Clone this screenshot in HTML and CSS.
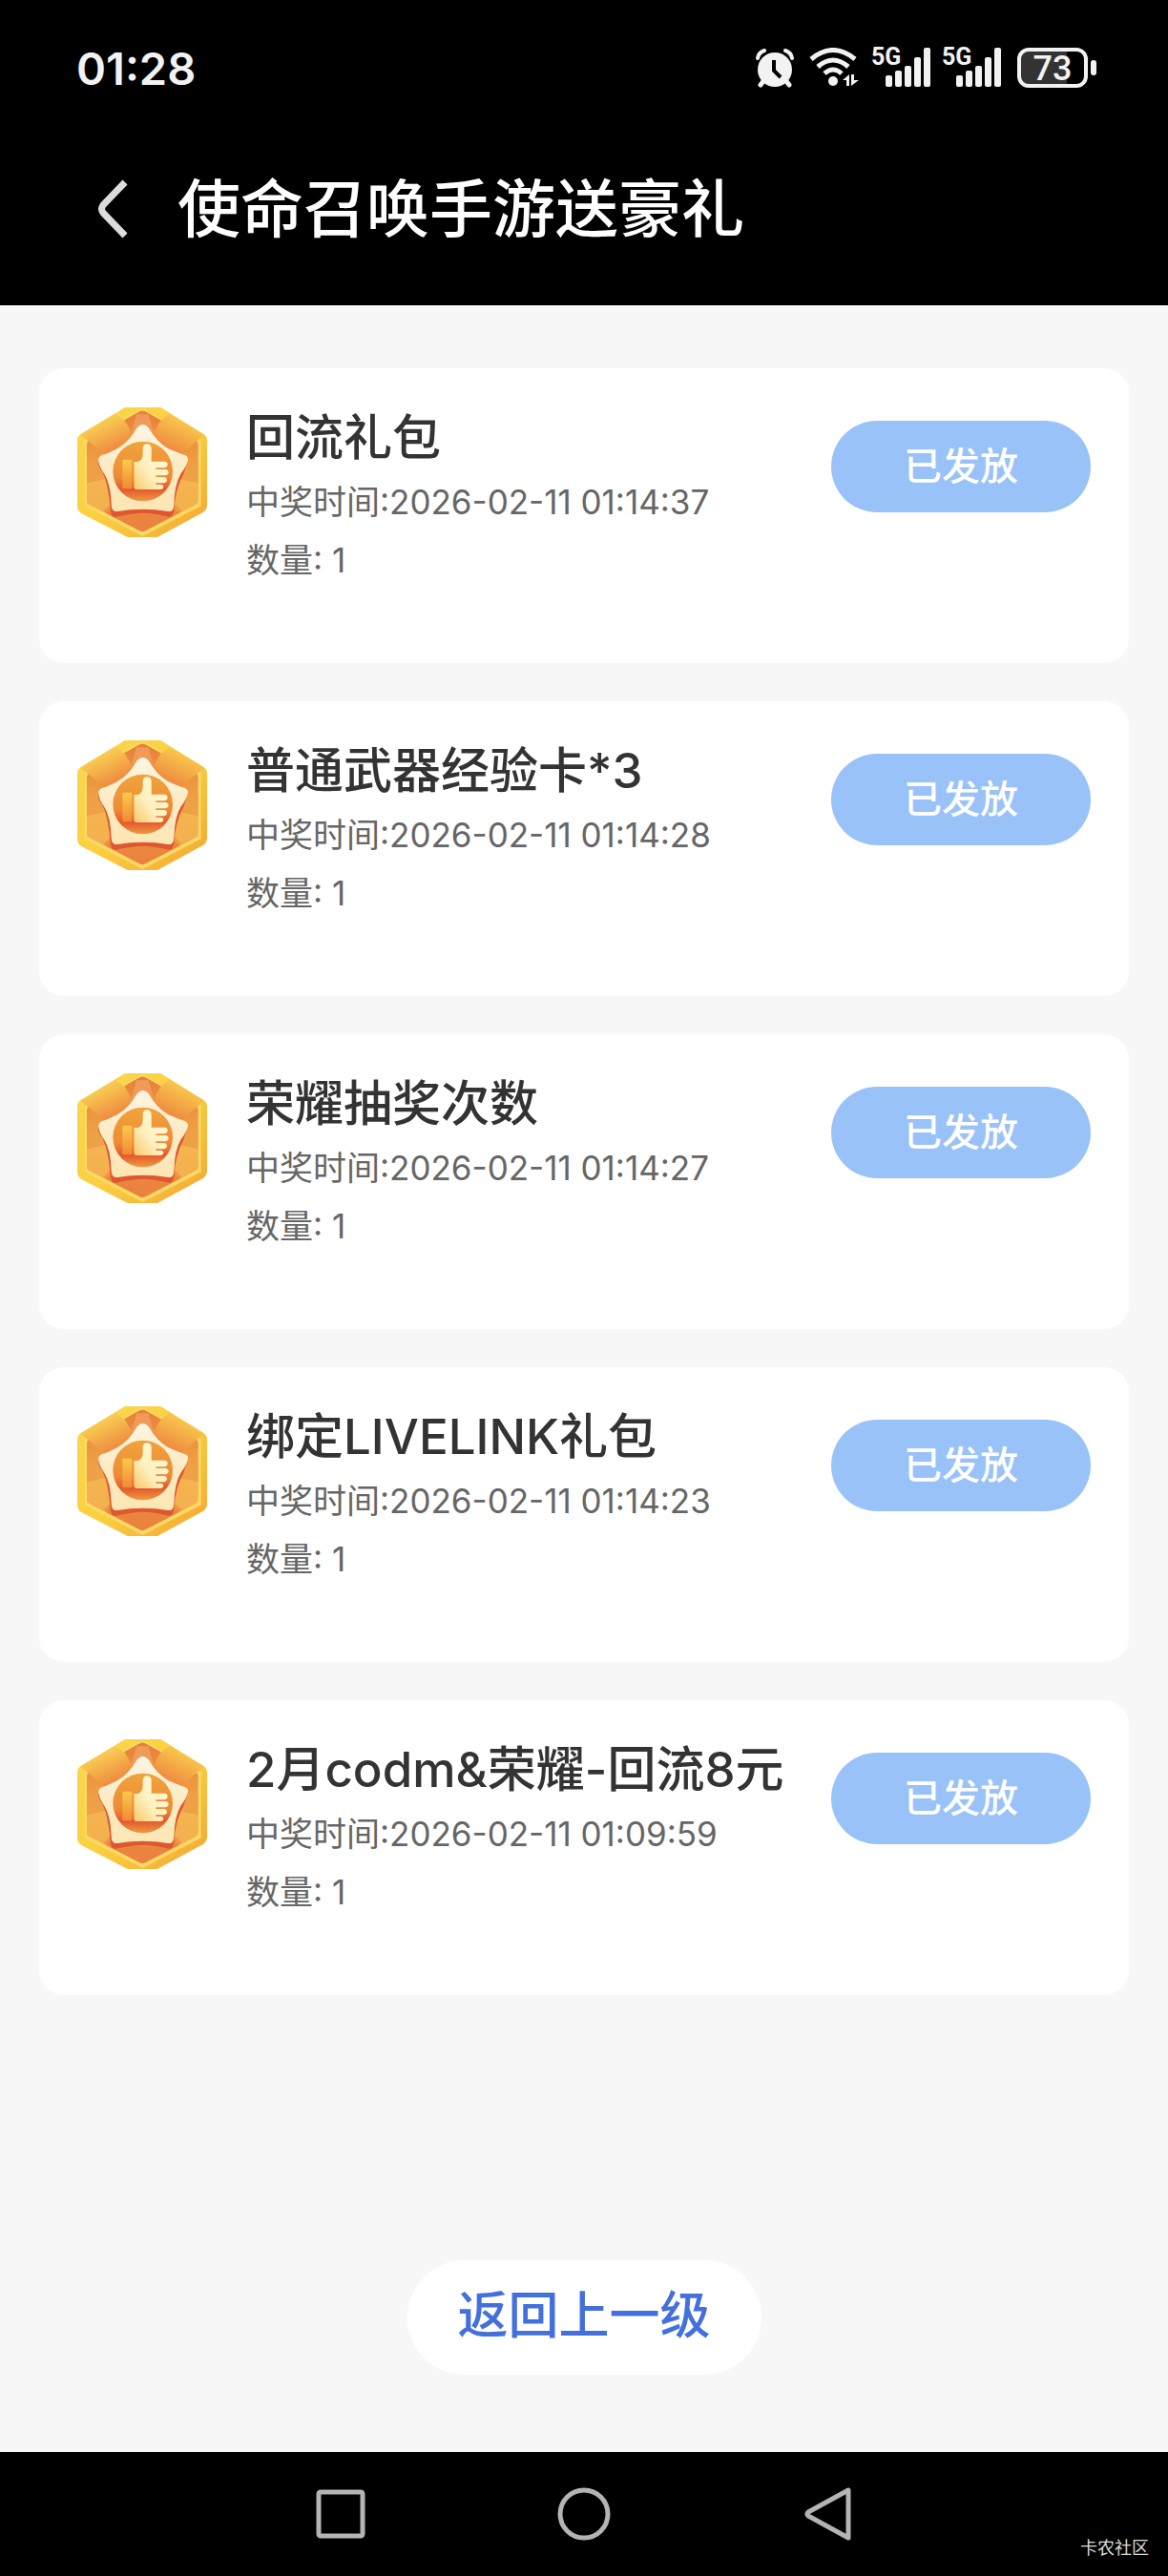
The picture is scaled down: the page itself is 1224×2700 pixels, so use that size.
FILE: index.html
```html
<!DOCTYPE html>
<html lang="zh-CN">
<head>
  <meta charset="UTF-8">
  <meta name="viewport" content="width=device-width, initial-scale=1.0">
  <title>使命召唤手游送豪礼</title>
  <link rel="stylesheet" href="styles.css">
</head>
<body>
  <!-- shared icons -->
  <svg class="sprite" width="0" height="0" aria-hidden="true">
    <defs>
      <linearGradient id="rim" x1="0" y1="0" x2="1" y2="1">
        <stop offset="0" stop-color="#f9d84e"/>
        <stop offset="0.5" stop-color="#fbd040"/>
        <stop offset="1" stop-color="#f2a634"/>
      </linearGradient>
      <linearGradient id="inner" x1="0" y1="0" x2="0" y2="1">
        <stop offset="0" stop-color="#e8803a"/>
        <stop offset="0.55" stop-color="#f0a744"/>
        <stop offset="1" stop-color="#eb8d42"/>
      </linearGradient>
      <linearGradient id="foldL" x1="0.2" y1="0.1" x2="0.7" y2="0.9">
        <stop offset="0" stop-color="#fadb5c"/>
        <stop offset="0.4" stop-color="#f6bb4c"/>
        <stop offset="1" stop-color="#ee8540"/>
      </linearGradient>
      <linearGradient id="foldR" x1="0.8" y1="0.1" x2="0.3" y2="0.9">
        <stop offset="0" stop-color="#fad250"/>
        <stop offset="0.4" stop-color="#f6b548"/>
        <stop offset="1" stop-color="#ee8540"/>
      </linearGradient>
      <linearGradient id="star" x1="0" y1="0" x2="0" y2="1">
        <stop offset="0" stop-color="#fdf6e4"/>
        <stop offset="0.5" stop-color="#fcebc4"/>
        <stop offset="1" stop-color="#fde6b4"/>
      </linearGradient>
      <linearGradient id="disc" x1="0" y1="0" x2="0" y2="1">
        <stop offset="0" stop-color="#efa43c"/>
        <stop offset="0.6" stop-color="#ef8a37"/>
        <stop offset="0.8" stop-color="#e3582e"/>
        <stop offset="1" stop-color="#f09a40"/>
      </linearGradient>
      <linearGradient id="hand" x1="1" y1="0" x2="0" y2="1">
        <stop offset="0" stop-color="#fffbe6"/>
        <stop offset="0.6" stop-color="#fff0bd"/>
        <stop offset="1" stop-color="#fbc76a"/>
      </linearGradient>
      <linearGradient id="cuff" x1="0" y1="0" x2="0" y2="1">
        <stop offset="0" stop-color="#fbcb4a"/>
        <stop offset="1" stop-color="#f08a35"/>
      </linearGradient>
    </defs>
    <symbol id="badge" viewBox="0 0 408 408">
      <path fill="url(#rim)" d="M150 0H262L394 82Q408 90 408 104V306Q408 322 394 331L252 408H158L14 334Q0 326 0 310V104Q0 90 14 82Z"/>
      <path fill="#fbd966" d="M205 3L389 101V310L205 405L23 310V101Z"/>
      <path fill="url(#inner)" d="M192 15Q205 6 218 15L368 98Q380 105 380 118V291Q380 301 370 307L215 388Q205 393 195 388L40 307Q30 301 30 291V118Q30 105 42 98Z"/>
      <path fill="#eda047" opacity=".7" d="M205 200L30 174V240ZM205 200L380 174V240Z"/>
      <path fill="#f6bb54" opacity=".7" d="M205 200L30 238V302L80 328ZM205 200L380 238V302L330 328Z"/>
      <path fill="#e8743a" opacity=".45" d="M205 200L90 333L205 391L320 333Z"/>
      <path fill="#f0a061" opacity=".8" d="M186 22L170 80H240L224 22Z"/>
      <path fill="url(#foldL)" d="M10 86L118 20L150 42L178 92L86 150L40 110Z"/>
      <path fill="url(#foldR)" d="M398 86L290 20L262 42L232 92L324 150L370 110Z"/>
      <path fill="#df5730" d="M66 170Q64 184 80 205Q98 245 104 320Q106 348 122 344Q175 332 206 332Q238 332 288 344Q302 346 304 320Q310 250 334 210L348 166Z"/>
      <path fill="url(#star)" d="M188 64Q206 44 224 64Q250 110 286 130Q322 145 338 150Q352 156 347 170Q342 186 326 208Q306 240 304 305Q303 330 286 327Q246 320 206 320Q166 320 126 327Q108 330 107 305Q105 240 84 208Q70 188 67 170Q64 156 78 150Q96 145 126 130Q162 110 188 64Z"/>
      <circle cx="206" cy="201" r="94" fill="url(#disc)"/>
      <rect x="142" y="164" width="30" height="92" rx="4" fill="url(#cuff)"/>
      <path fill="url(#hand)" d="M178 171H190Q206 166 206 146V128Q207 115 220 115Q233 116 233 130V170H274Q284 171 284 180Q283 189 273 190H247V195H276Q287 196 287 205Q286 213 276 214H247V219H272Q282 220 282 229Q281 237 272 238H247V242H262Q271 243 271 250Q270 258 260 258H188Q178 258 178 248Z"/>
    </symbol>
    <symbol id="signal" viewBox="0 0 48 42">
      <g fill="#f2f2f2">
        <rect x="0" y="29" width="7" height="12" rx="2"/>
        <rect x="10" y="24" width="7" height="17" rx="2"/>
        <rect x="20" y="19" width="7" height="22" rx="2"/>
        <rect x="30" y="10" width="7" height="31" rx="2"/>
        <rect x="40" y="0" width="7" height="41" rx="2"/>
      </g>
    </symbol>
  </svg>

  <div class="status-bar">
    <time class="clock">01:28</time>
    <div class="status-icons">
      <svg width="40" height="42" viewBox="0 0 40 42" aria-label="闹钟">
        <g fill="none" stroke="#f2f2f2" stroke-linecap="round">
          <path stroke-width="4" d="M2 11Q3 5 9 3M38 11Q37 5 31 3"/>
          <path stroke-width="5" d="M8 35L5 39M32 35L35 39"/>
        </g>
        <circle cx="20" cy="23" r="18" fill="#f2f2f2"/>
        <path d="M19 13V24L26 31" fill="none" stroke="#000" stroke-width="4"/>
      </svg>
      <svg class="wifi" width="54" height="42" viewBox="0 0 54 42" aria-label="无线网络">
        <g fill="none" stroke="#f2f2f2" stroke-width="5">
          <path d="M2 12Q25 -7 48 12"/>
          <path d="M9 20Q25 6 41 20"/>
          <path d="M16 27Q25 19 34 27"/>
        </g>
        <circle cx="25" cy="35" r="5" fill="#f2f2f2"/>
        <path d="M35 34L42 28V40H39V34ZM44 28H47V34H52L44 40Z" fill="#f2f2f2"/>
      </svg>
      <div class="network">
        <span class="network-type">5G</span>
        <svg width="48" height="42"><use href="#signal"/></svg>
      </div>
      <div class="network">
        <span class="network-type">5G</span>
        <svg width="48" height="42"><use href="#signal"/></svg>
      </div>
      <div class="battery"><span class="battery-level">73</span></div>
    </div>
  </div>

  <header class="header">
    <button class="back" type="button" aria-label="返回">
      <svg width="32" height="62" viewBox="0 0 32 62" fill="none" stroke="#dcdcdc" stroke-width="7" stroke-linejoin="round">
        <path d="M29 3L6 27Q3 31 6 35L29 59"/>
      </svg>
    </button>
    <h1>使命召唤手游送豪礼</h1>
  </header>

  <main class="content">
    <ul class="prizes">
      <li class="card">
        <svg class="badge"><use href="#badge"/></svg>
        <div class="info">
          <h2>回流礼包</h2>
          <p>中奖时间:2026-02-11 01:14:37</p>
          <p>数量: 1</p>
        </div>
        <button class="state" type="button">已发放</button>
      </li>
      <li class="card">
        <svg class="badge"><use href="#badge"/></svg>
        <div class="info">
          <h2>普通武器经验卡*3</h2>
          <p>中奖时间:2026-02-11 01:14:28</p>
          <p>数量: 1</p>
        </div>
        <button class="state" type="button">已发放</button>
      </li>
      <li class="card">
        <svg class="badge"><use href="#badge"/></svg>
        <div class="info">
          <h2>荣耀抽奖次数</h2>
          <p>中奖时间:2026-02-11 01:14:27</p>
          <p>数量: 1</p>
        </div>
        <button class="state" type="button">已发放</button>
      </li>
      <li class="card">
        <svg class="badge"><use href="#badge"/></svg>
        <div class="info">
          <h2>绑定LIVELINK礼包</h2>
          <p>中奖时间:2026-02-11 01:14:23</p>
          <p>数量: 1</p>
        </div>
        <button class="state" type="button">已发放</button>
      </li>
      <li class="card">
        <svg class="badge"><use href="#badge"/></svg>
        <div class="info">
          <h2>2月codm&amp;荣耀-回流8元</h2>
          <p>中奖时间:2026-02-11 01:09:59</p>
          <p>数量: 1</p>
        </div>
        <button class="state" type="button">已发放</button>
      </li>
    </ul>
    <button class="return" type="button">返回上一级</button>
  </main>

  <nav class="nav-bar">
    <button type="button" aria-label="最近任务">
      <svg width="56" height="56" viewBox="0 0 56 56"><rect x="5" y="5" width="46" height="46" rx="2"/></svg>
    </button>
    <button type="button" aria-label="主页">
      <svg width="56" height="56" viewBox="0 0 56 56"><circle cx="28" cy="28" r="25"/></svg>
    </button>
    <button type="button" aria-label="返回">
      <svg width="56" height="56" viewBox="0 0 56 56"><path d="M50 3V53L8 30Q6 28 8 26Z"/></svg>
    </button>
    <span class="watermark">卡农社区</span>
  </nav>
</body>
</html>
```
FILE: styles.css
```css
* {
  box-sizing: border-box;
  margin: 0;
  padding: 0;
}
body {
  display: flex;
  flex-direction: column;
  min-height: 100vh;
  background: #f7f7f7;
  color: #333;
  font-family: Inter, "Noto Sans CJK SC", sans-serif;
}
button {
  border: none;
  background: none;
  font-family: inherit;
  cursor: pointer;
}
svg {
  display: block;
}
.sprite {
  position: absolute;
}

/* status bar */
.status-bar {
  display: flex;
  justify-content: space-between;
  align-items: center;
  height: 142px;
  padding: 0 76px 0 80px;
  background: #000;
  color: #f2f2f2;
}
.clock {
  font-size: 47px;
  font-weight: 600;
}
.status-icons {
  display: flex;
  align-items: center;
  gap: 12px;
}
.wifi {
  margin-left: 4px;
}
.network {
  position: relative;
  padding-left: 14px;
}
.network-type {
  position: absolute;
  top: 0;
  left: -1px;
  font: 700 25px/20px Roboto, sans-serif;
}
.battery {
  position: relative;
  width: 74px;
  height: 42px;
  margin: 0 8px 0 4px;
  border: 4px solid #f2f2f2;
  border-radius: 12px;
  background: linear-gradient(90deg, #333 73%, #000 73%);
  text-align: center;
}
.battery::after {
  content: "";
  position: absolute;
  top: 9px;
  right: -13px;
  width: 6px;
  height: 16px;
  border-radius: 3px;
  background: #f2f2f2;
}
.battery-level {
  display: block;
  font: 500 36px/36px Roboto, sans-serif;
}

.header {
  display: flex;
  align-items: center;
  gap: 52px;
  height: 178px;
  padding: 0 102px 24px;
  background: #000;
  color: #fff;
}
.header h1 {
  font-size: 66px;
  font-weight: 500;
  line-height: 96px;
}

.content {
  flex: 1;
  display: flex;
  flex-direction: column;
  justify-content: space-between;
  align-items: center;
  padding: 66px 41px 81px;
}
.prizes {
  display: flex;
  flex-direction: column;
  gap: 40px;
  width: 100%;
  list-style: none;
}
.card {
  display: flex;
  align-items: flex-start;
  min-height: 309px;
  padding: 41px 40px;
  border-radius: 26px;
  background: #fff;
}
.badge {
  flex: none;
  width: 136px;
  height: 136px;
}
.info {
  flex: 1;
  padding-left: 41px;
}
.info h2 {
  margin-bottom: 5px;
  font-size: 51px;
  font-weight: 500;
  line-height: 64px;
  white-space: nowrap;
}
.info p {
  color: #666;
  font-size: 35px;
  line-height: 61px;
}
.state {
  flex: none;
  width: 272px;
  height: 96px;
  margin-top: 14px;
  padding-bottom: 6px;
  border-radius: 48px;
  background: #99c2f8;
  color: #fff;
  font-size: 40px;
  font-weight: 500;
}
.return {
  padding: 0 53px 4px;
  border-radius: 60px;
  background: #fff;
  color: #4370dc;
  font-size: 53px;
  font-weight: 500;
  line-height: 116px;
}

/* bottom navigation */
.nav-bar {
  position: relative;
  display: flex;
  justify-content: center;
  align-items: center;
  gap: 199px;
  height: 130px;
  background: #000;
}
.nav-bar svg {
  fill: none;
  stroke: #b4b4b4;
  stroke-width: 5;
  stroke-linejoin: round;
}
.watermark {
  position: absolute;
  right: 20px;
  bottom: 18px;
  color: #ddd;
  font-size: 18px;
}
```
